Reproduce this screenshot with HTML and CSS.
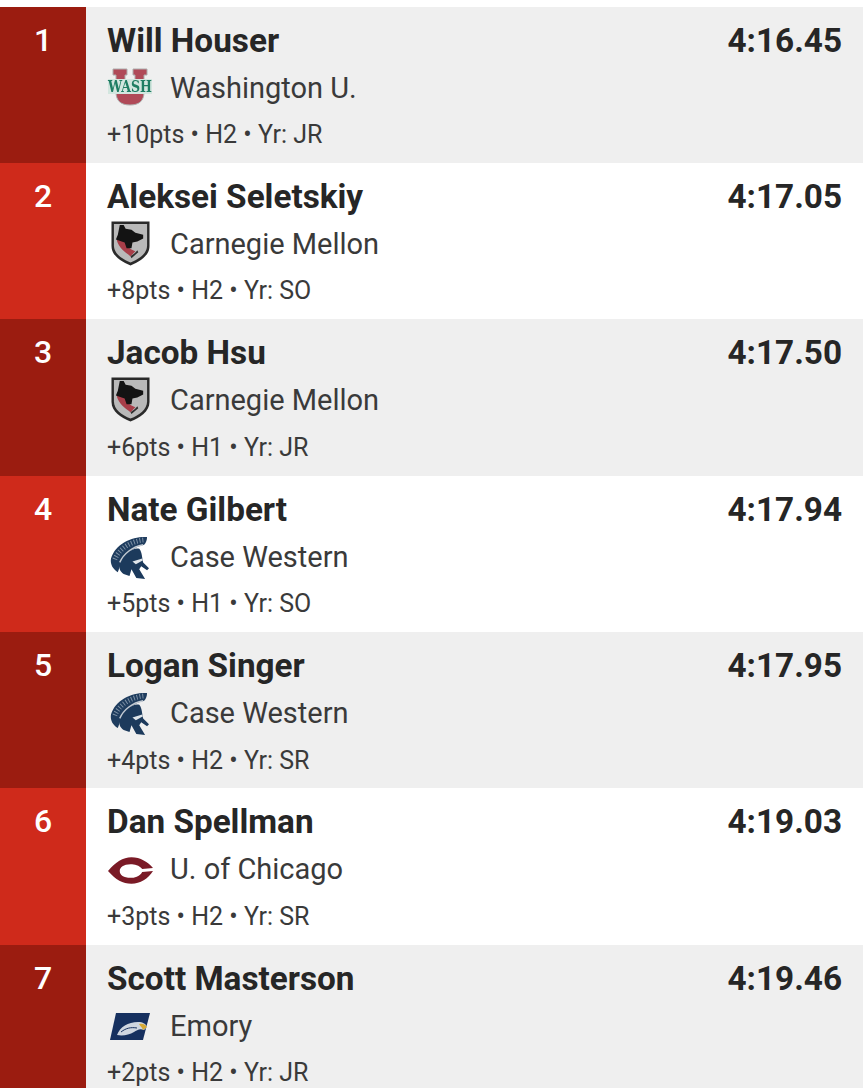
FILE: index.html
```html
<!DOCTYPE html>
<html lang="en">
<head>
    <meta charset="UTF-8">
    <meta name="viewport" content="width=device-width, initial-scale=1.0">
    <title>Race Results</title>
    <link rel="stylesheet" href="styles.css">
</head>
<body>
    <svg class="defs" width="0" height="0">
        <symbol id="logo-cmu" viewBox="0 0 40 46">
            <path d="M0.500 0.500h39v25c0 10-10 16-19.500 20C10.500 41.500 0.500 35.500 0.500 25.500z" fill="#2a2a2a"/>
            <path d="M3 3h34v22c0 8-8 14-17 17.500C11 39 3 33 3 25z" fill="#b9b9b9"/>
            <path d="M6 20c2 7 8 12 14 16l5-5c-5-2-8-4-10-9l-7-4z" fill="#a83e49"/>
            <path d="M9 4h4l2 4 6 1 4 3 8 2v4l-6 3-5 1-1 6h-5l-2-6-9-3 2-5z" fill="#131313"/>
            <path d="M20 36c3-2 5-3 7-6l1 2-7 6z" fill="#2f2f2f"/>
        </symbol>
        <symbol id="logo-case" viewBox="0 0 40 46">
            <path d="M38 2C24 1 6 8 1 24c-1 6 2 11 7 14l3-8c3-10 14-18 24-20 2-2 3-5 3-8z" fill="#1f3d5f"/>
            <path d="M5 25C9 14 22 6 35 5" fill="none" stroke="#7f92a6" stroke-width="5" stroke-dasharray="1 2"/>
            <path d="M10 30C14 19 24 12 30 14c3 3 3 11 4 14l6 6-2 2-6-4-2 3 6 10-9-1-5-9-2 7-6-2c-4-3-5-6-4-10z" fill="#1c3a5c"/>
            <path d="M10 28c4-9 13-16 24-18" fill="none" stroke="#c3cad2" stroke-width="1.500"/>
            <path d="M23 27l10-3 .5 2-7 4z" fill="#dfe5ea"/>
        </symbol>
        <symbol id="logo-chicago" viewBox="0 0 46 27">
            <path d="M0 14C8 5 15 0 24 0c9 0 17 5 22 11l-11 1c-3-4-8-5-12-5-7 0-11 3-11 7s4 7 11 7c4 0 9-1 12-6l11-1c-5 8-13 13-22 13-9 0-16-4-24-13z" fill="#7a1a26"/>
        </symbol>
        <symbol id="logo-emory" viewBox="0 0 40 27">
            <path d="M6 0h34l-7 27H0z" fill="#16305f"/>
            <path d="M7 22c3-8 11-13 21-13 5 0 8 2 9 5l-3 3c-4-2-7 0-10 2-5 3-11 4-17 3z" fill="#cfd6e0"/>
            <path d="M29 11c4-1 7 1 8 3l-4 3c-1-3-3-4-4-6z" fill="#d5a935"/>
            <path d="M11 19c5-4 10-5 16-4" fill="none" stroke="#16305f" stroke-width="1"/>
        </symbol>
    </svg>

    <main class="results">
        <div class="row">
            <div class="place">1</div>
            <div class="info">
                <div class="name">Will Houser</div>
                <div class="school">
                    <svg class="logo" viewBox="0 0 63 46">
                        <path d="M6 4h14v6h-2v13c0 5 10 5 10 0V10h-2V4h14v6h-3v17c0 9-5 13-14 13S9 36 9 27V10H6z" fill="#b04a58" stroke="#adadad"/>
                        <rect x="1" y="14" width="44" height="15" fill="#d3e6df"/>
                        <text x="23" y="27" text-anchor="middle" class="wash-text" textLength="44" lengthAdjust="spacingAndGlyphs">WASH</text>
                    </svg>
                    Washington U.
                </div>
                <div class="meta">+10pts • H2 • Yr: JR</div>
            </div>
            <div class="time">4:16.45</div>
        </div>
        <div class="row">
            <div class="place">2</div>
            <div class="info">
                <div class="name">Aleksei Seletskiy</div>
                <div class="school"><svg class="logo"><use href="#logo-cmu" x="4" y="0" width="39" height="45"/></svg>Carnegie Mellon</div>
                <div class="meta">+8pts • H2 • Yr: SO</div>
            </div>
            <div class="time">4:17.05</div>
        </div>
        <div class="row">
            <div class="place">3</div>
            <div class="info">
                <div class="name">Jacob Hsu</div>
                <div class="school"><svg class="logo"><use href="#logo-cmu" x="4" y="0" width="39" height="45"/></svg>Carnegie Mellon</div>
                <div class="meta">+6pts • H1 • Yr: JR</div>
            </div>
            <div class="time">4:17.50</div>
        </div>
        <div class="row">
            <div class="place">4</div>
            <div class="info">
                <div class="name">Nate Gilbert</div>
                <div class="school"><svg class="logo"><use href="#logo-case" x="3" y="1" width="39" height="45"/></svg>Case Western</div>
                <div class="meta">+5pts • H1 • Yr: SO</div>
            </div>
            <div class="time">4:17.94</div>
        </div>
        <div class="row">
            <div class="place">5</div>
            <div class="info">
                <div class="name">Logan Singer</div>
                <div class="school"><svg class="logo"><use href="#logo-case" x="3" y="1" width="39" height="45"/></svg>Case Western</div>
                <div class="meta">+4pts • H2 • Yr: SR</div>
            </div>
            <div class="time">4:17.95</div>
        </div>
        <div class="row">
            <div class="place">6</div>
            <div class="info">
                <div class="name">Dan Spellman</div>
                <div class="school"><svg class="logo"><use href="#logo-chicago" x="1" y="11" width="45" height="27"/></svg>U. of Chicago</div>
                <div class="meta">+3pts • H2 • Yr: SR</div>
            </div>
            <div class="time">4:19.03</div>
        </div>
        <div class="row">
            <div class="place">7</div>
            <div class="info">
                <div class="name">Scott Masterson</div>
                <div class="school"><svg class="logo"><use href="#logo-emory" x="3" y="10" width="40" height="27"/></svg>Emory</div>
                <div class="meta">+2pts • H2 • Yr: JR</div>
            </div>
            <div class="time">4:19.46</div>
        </div>
    </main>
</body>
</html>
```

FILE: styles.css
```css
html, body {
    height: 1088px;
    overflow: hidden;
}
body {
    margin: 0;
    background-color: #fff;
    font-family: Roboto, "Liberation Sans", sans-serif;
    color: #2b2b2b;
}
.defs {
    display: block;
    height: 0;
}
.results {
    padding-top: 6.5px;
}
.row {
    display: flex;
    height: 156.4px;
    background-color: #fff;
}
.row:nth-child(odd) {
    background-color: #efefef;
}
.place {
    flex: 0 0 86px;
    padding-top: 14px;
    box-sizing: border-box;
    background-color: #cf2a1b;
    color: #fff;
    font-size: 32px;
    font-weight: 500;
    line-height: 38px;
    text-align: center;
}
.row:nth-child(odd) .place {
    background-color: #9b1c10;
}
.info {
    flex: 1;
    padding-left: 21px;
    padding-top: 15px;
}
.name {
    font-size: 33.3px;
    font-weight: 700;
    line-height: 38px;
    color: #262626;
}
.school {
    display: flex;
    align-items: center;
    height: 46px;
    margin-top: 5px;
    font-size: 29px;
    color: #3a3a3a;
}
.logo {
    width: 63px;
    height: 46px;
    flex: none;
    filter: blur(0.4px);
}
.meta {
    margin-top: 8.5px;
    font-size: 25px;
    line-height: 32px;
    color: #3a3a3a;
}
.time {
    padding-top: 15px;
    padding-right: 21px;
    font-size: 33.3px;
    font-weight: 700;
    line-height: 38px;
    color: #262626;
}
.wash-text {
    font-family: "DejaVu Serif", serif;
    font-size: 17px;
    font-weight: 700;
    fill: #1f7d63;
}
```
